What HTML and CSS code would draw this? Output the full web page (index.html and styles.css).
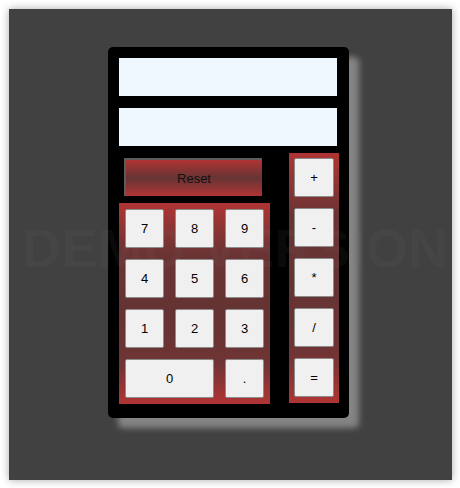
FILE: index.html
```html
<!DOCTYPE html>
<html>
<head>
<meta charset="utf-8">
<link rel="stylesheet" href="styles.css">
</head>
<body>
<div class="stage">
  <div class="calc">
    <div class="display"></div>
    <div class="display"></div>
    <div class="body">
      <div class="left">
        <div class="reset">Reset</div>
        <div class="numpad">
          <div class="key">7</div><div class="key">8</div><div class="key">9</div>
          <div class="key">4</div><div class="key">5</div><div class="key">6</div>
          <div class="key">1</div><div class="key">2</div><div class="key">3</div>
          <div class="key zero">0</div><div class="key">.</div>
        </div>
      </div>
      <div class="ops">
        <div class="key">+</div>
        <div class="key">-</div>
        <div class="key">*</div>
        <div class="key">/</div>
        <div class="key">=</div>
      </div>
    </div>
  </div>
  <div class="watermark">DEMO VERSION</div>
</div>
</body>
</html>
```

FILE: styles.css
```css
html, body {
  margin: 0;
  padding: 0;
  background: #ffffff;
}
body {
  width: 460px;
  height: 488px;
  overflow: hidden;
  font-family: "Liberation Sans", Arial, sans-serif;
}
.stage {
  position: relative;
  margin: 9px 0 0 9px;
  width: 443px;
  height: 471px;
  box-sizing: border-box;
  background: #414141;
  padding: 38px 0 0 99px;
  box-shadow: 0 0 8px rgba(0, 0, 0, 0.35);
}
.calc {
  width: 241px;
  height: 371px;
  box-sizing: border-box;
  background: #000;
  border-radius: 5px;
  padding: 11px 12px 0 11px;
  box-shadow: 10px 10px 6px #858585;
}
.display {
  height: 38px;
  background: #f0f8ff;
  margin-bottom: 12px;
}
.display + .display {
  margin-bottom: 0;
}
.body {
  display: flex;
  gap: 19px;
}
.left {
  display: flex;
  flex-direction: column;
  padding-top: 12px;
  gap: 7px;
}
.reset {
  margin-left: 5px;
  width: 138px;
  height: 38px;
  box-sizing: border-box;
  border-top: 2px solid #5c5c5c;
  border-left: 2px solid #5c5c5c;
  background: linear-gradient(to bottom, #b03434 0%, #673434 50%, #b03434 100%);
  display: flex;
  align-items: center;
  justify-content: center;
  font-size: 13px;
  color: #111;
}
.numpad {
  width: 151px;
  box-sizing: border-box;
  padding: 6px;
  display: grid;
  grid-template-columns: 39px 39px 39px;
  grid-auto-rows: 39px;
  gap: 11px;
  background: linear-gradient(to bottom, #b03434 0%, #6b3434 25%, #653333 55%, #703434 80%, #b03434 100%);
}
.ops {
  margin-top: 7px;
  width: 50px;
  height: 250px;
  box-sizing: border-box;
  padding: 5px 5px 6px;
  display: grid;
  grid-template-columns: 40px;
  grid-auto-rows: 39px;
  gap: 11px;
  background: linear-gradient(to bottom, #b03434 0%, #6b3434 25%, #653333 55%, #703434 80%, #b03434 100%);
}
.key {
  position: relative;
  z-index: 2;
  box-sizing: border-box;
  background: #f0f0f0;
  border: 1px solid #8c8c8c;
  border-radius: 2px;
  display: flex;
  align-items: center;
  justify-content: center;
  font-size: 13px;
  color: #000;
}
.zero {
  grid-column: span 2;
}
.watermark {
  position: absolute;
  z-index: 1;
  left: 13px;
  top: 208px;
  font-size: 54px;
  font-weight: bold;
  color: rgba(128, 128, 128, 0.08);
  white-space: nowrap;
  pointer-events: none;
  letter-spacing: 0.5px;
}
```
